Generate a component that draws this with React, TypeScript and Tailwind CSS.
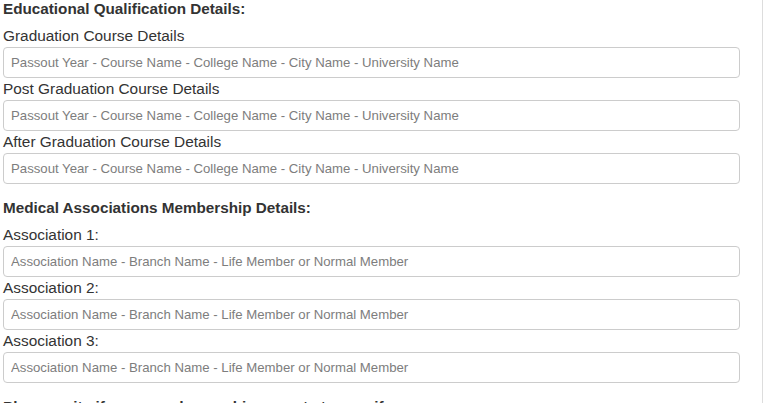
const education = [
  "Graduation Course Details",
  "Post Graduation Course Details",
  "After Graduation Course Details",
];

const associations = ["Association 1:", "Association 2:", "Association 3:"];

function Field({ label, placeholder }: { label: string; placeholder: string }) {
  return (
    <div>
      <label className="block text-[15.4px] leading-[22px] text-[#333]">{label}</label>
      <input
        type="text"
        placeholder={placeholder}
        className="block w-full h-[31px] rounded-[4px] border border-[#ccc] bg-white px-[7px] text-[13.2px] text-[#333] placeholder:text-[#7d7d7d] outline-none"
      />
    </div>
  );
}

export default function App() {
  return (
    <div
      className="min-h-[403px] w-[763px] border-r border-[#ddd] bg-white pl-[3px] pr-[22px] text-[#333]"
      style={{ fontFamily: '"Liberation Sans", Arial, sans-serif' }}
    >
      <h4 className="mb-2 text-[15.25px] font-bold leading-[17px]">
        Educational Qualification Details:
      </h4>
      {education.map((label) => (
        <Field
          key={label}
          label={label}
          placeholder="Passout Year - Course Name - College Name - City Name - University Name"
        />
      ))}

      <h4 className="mt-[15px] mb-2 text-[15.25px] font-bold leading-[17px]">
        Medical Associations Membership Details:
      </h4>
      {associations.map((label) => (
        <Field
          key={label}
          label={label}
          placeholder="Association Name - Branch Name - Life Member or Normal Member"
        />
      ))}

      <h4 className="mt-[15px] mb-2 text-[15.25px] font-bold leading-[17px]">
        Please write if any awards or achievements to specify:
      </h4>
    </div>
  );
}
